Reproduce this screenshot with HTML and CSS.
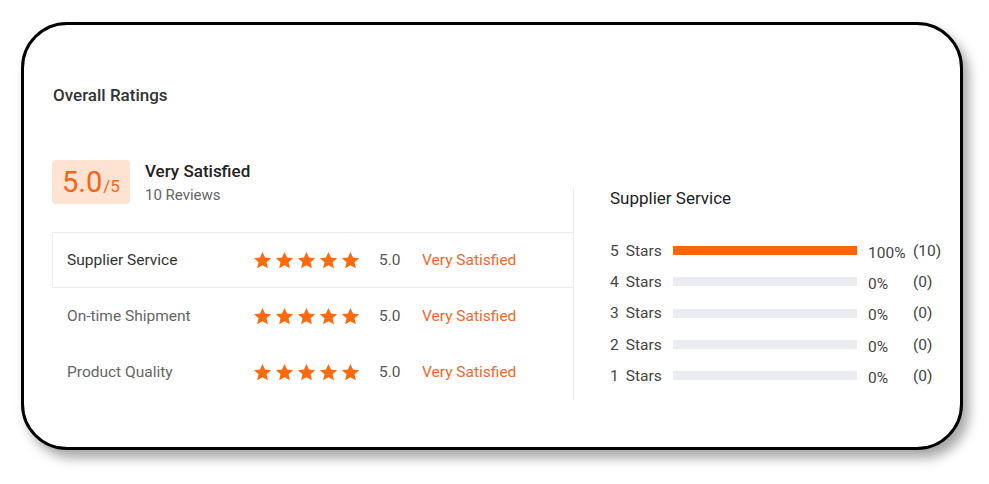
FILE: index.html
```html
<!DOCTYPE html>
<html lang="en">
<head>
<meta charset="utf-8">
<title>Overall Ratings</title>
<link rel="stylesheet" href="styles.css">
</head>
<body>
<svg width="0" height="0" class="defs" aria-hidden="true">
  <defs>
    <symbol id="star" viewBox="0 0 24 24">
      <path d="M12 1.2l3.2 7.1 7.7.8-5.8 5.2 1.7 7.6L12 18l-6.8 3.9 1.7-7.6L1.1 9.1l7.7-.8z"/>
    </symbol>
  </defs>
</svg>
<div class="card">
  <h2 class="title">Overall Ratings</h2>
  <div class="content">
    <div class="left">
      <div class="summary">
        <div class="score"><span class="big">5.0</span><span class="small">/5</span></div>
        <div class="sumtext">
          <div class="sat">Very Satisfied</div>
          <div class="reviews">10 Reviews</div>
        </div>
      </div>
      <div class="table">
        <div class="row active">
          <span class="name">Supplier Service</span>
          <span class="stars"><svg><use href="#star"/></svg><svg><use href="#star"/></svg><svg><use href="#star"/></svg><svg><use href="#star"/></svg><svg><use href="#star"/></svg></span>
          <span class="val">5.0</span>
          <span class="lvl">Very Satisfied</span>
        </div>
        <div class="row">
          <span class="name">On-time Shipment</span>
          <span class="stars"><svg><use href="#star"/></svg><svg><use href="#star"/></svg><svg><use href="#star"/></svg><svg><use href="#star"/></svg><svg><use href="#star"/></svg></span>
          <span class="val">5.0</span>
          <span class="lvl">Very Satisfied</span>
        </div>
        <div class="row">
          <span class="name">Product Quality</span>
          <span class="stars"><svg><use href="#star"/></svg><svg><use href="#star"/></svg><svg><use href="#star"/></svg><svg><use href="#star"/></svg><svg><use href="#star"/></svg></span>
          <span class="val">5.0</span>
          <span class="lvl">Very Satisfied</span>
        </div>
      </div>
    </div>
    <div class="right">
      <div class="rtitle">Supplier Service</div>
      <div class="dist">
        <div class="drow"><span class="lab"><span class="n">5</span>Stars</span><span class="bar"><span class="fill" style="width:100%"></span></span><span class="pct">100%</span><span class="cnt">(10)</span></div>
        <div class="drow"><span class="lab"><span class="n">4</span>Stars</span><span class="bar"><span class="fill" style="width:0%"></span></span><span class="pct">0%</span><span class="cnt">(0)</span></div>
        <div class="drow"><span class="lab"><span class="n">3</span>Stars</span><span class="bar"><span class="fill" style="width:0%"></span></span><span class="pct">0%</span><span class="cnt">(0)</span></div>
        <div class="drow"><span class="lab"><span class="n">2</span>Stars</span><span class="bar"><span class="fill" style="width:0%"></span></span><span class="pct">0%</span><span class="cnt">(0)</span></div>
        <div class="drow"><span class="lab"><span class="n">1</span>Stars</span><span class="bar"><span class="fill" style="width:0%"></span></span><span class="pct">0%</span><span class="cnt">(0)</span></div>
      </div>
    </div>
  </div>
</div>
</body>
</html>
```

FILE: styles.css
```css
* { box-sizing: border-box; }
html, body { margin: 0; padding: 0; background: #fff; }
body {
  font-family: Roboto, "Liberation Sans", Arial, sans-serif;
  color: #333;
  width: 989px;
  height: 484px;
  overflow: hidden;
  padding: 22px 0 0 21px;
}
.defs { position: absolute; width: 0; height: 0; }
.card {
  width: 942px;
  height: 428px;
  border: 3px solid #000;
  border-radius: 46px;
  background: #fff;
  box-shadow: 6px 8px 12px rgba(0,0,0,0.35);
  padding: 60px 0 0 28px;
}
.title {
  margin: 0;
  font-size: 17px;
  font-weight: 500;
  line-height: 20px;
  color: #333;
  padding-left: 1px;
}
.content {
  display: flex;
  align-items: flex-start;
  margin-top: 55px;
}
.left { width: 521px; }
.summary { display: flex; align-items: flex-start; }
.score {
  width: 78px;
  height: 44px;
  background: #fee3d3;
  border-radius: 4px;
  padding-left: 10px;
  display: flex;
  align-items: baseline;
  line-height: 44px;
  color: #f5651a;
}
.score .big { font-size: 29px; }
.score .small { font-size: 17px; margin-left: 1px; }
.sumtext { margin-left: 15px; }
.sat { font-size: 17px; font-weight: 500; line-height: 22px; color: #222; }
.reviews { font-size: 15px; line-height: 26px; color: #666; }
.table { margin-top: 24px; }
.row {
  display: flex;
  align-items: center;
  height: 56px;
  padding-left: 14px;
  font-size: 15.5px;
  color: #666;
  border: 1px solid transparent;
  border-right: none;
}
.row.active {
  border-color: #ebebeb;
  color: #333;
}
.name { width: 186px; }
.stars { display: flex; gap: 3px; }
.stars svg { width: 19px; height: 19px; fill: #ff6a0f; display: block; }
.val { margin-left: 19px; width: 43px; color: #555; }
.lvl { color: #f2692a; }
.right {
  margin-top: 27px;
  height: 213px;
  border-left: 1px solid #ececec;
  padding-left: 36px;
  padding-top: 1px;
}
.rtitle { font-size: 17px; line-height: 20px; color: #222; }
.dist { margin-top: 27px; }
.drow {
  display: flex;
  align-items: center;
  height: 31.3px;
  font-size: 15.5px;
  color: #444;
}
.lab { width: 63px; }
.lab .n { margin-right: 7px; }
.bar {
  width: 184px;
  height: 9px;
  background: #ebecf0;
  display: block;
}
.fill { display: block; height: 100%; background: #ff6600; }
.pct { margin-left: 11px; width: 45px; margin-top: 4px; }
```
